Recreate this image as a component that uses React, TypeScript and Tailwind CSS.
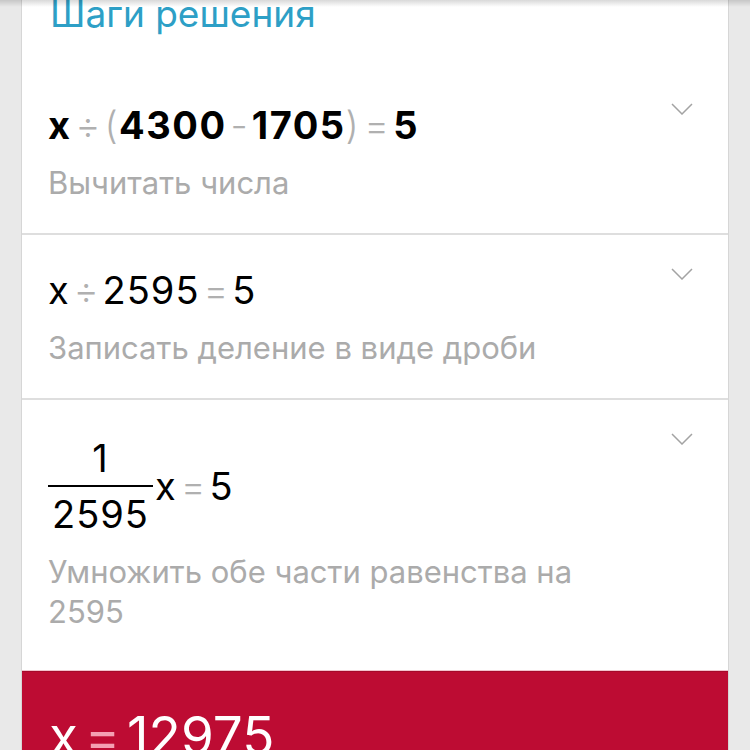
type Step = {
  id: number;
  hint: string;
};

function Chevron() {
  return (
    <svg width="22" height="12" viewBox="0 0 22 12" className="shrink-0">
      <path d="M1 1 L11 11 L21 1" fill="none" stroke="#a3a3a3" strokeWidth="1.5" />
    </svg>
  );
}

function Op({ children }: { children: React.ReactNode }) {
  return <span className="mx-[4px] font-light tracking-normal text-[#b0b0b0]">{children}</span>;
}

function StepRow({ step, children }: { step: Step; children: React.ReactNode }) {
  return (
    <div className="flex justify-between border-b-2 border-[#dedede] pl-[26px] pr-[35px] pt-[35px] pb-[30px]">
      <div className="flex flex-col">
        {children}
        <p className="mt-[18px] max-w-[560px] text-[31px] leading-[40px] text-[#ababab]">
          {step.hint}
        </p>
      </div>
      <div className="-mt-[2px]">
        <Chevron />
      </div>
    </div>
  );
}

const steps: Step[] = [
  { id: 1, hint: 'Вычитать числа' },
  { id: 2, hint: 'Записать деление в виде дроби' },
  { id: 3, hint: 'Умножить обе части равенства на 2595' },
];

export default function App() {
  return (
    <div className="relative min-h-screen overflow-hidden bg-[#e9e9e9] font-['Inter','Liberation_Sans',sans-serif]">
      <div className="pointer-events-none absolute inset-x-0 top-0 h-[7px] bg-gradient-to-b from-black/15 to-transparent" />
      <div className="mx-[21px] border-x border-[#d6d6d6] bg-white">
        <div className="h-[70px] pl-[28px]">
          <h2 className="text-[37px] leading-[27px] text-[#2d9fc6]">Шаги решения</h2>
        </div>

        <StepRow step={steps[0]}>
          <div className="text-[38px] font-bold leading-[40px] tracking-[1.5px] text-black">
            x<Op>÷</Op>
            <span className="font-light text-[#b0b0b0]">(</span>4300<Op>-</Op>1705
            <span className="font-light text-[#b0b0b0]">)</span>
            <Op>=</Op>5
          </div>
        </StepRow>

        <StepRow step={steps[1]}>
          <div className="text-[38px] leading-[40px] tracking-[1px] text-black">
            x<Op>÷</Op>2595<Op>=</Op>5
          </div>
        </StepRow>

        <div className="flex justify-between pl-[26px] pr-[35px] pt-[35px] pb-[38px]">
          <div className="flex flex-col">
            <div className="mt-[3px] flex items-center text-[38px] leading-[40px] tracking-[1px] text-black">
              <div className="flex flex-col items-center">
                <span>1</span>
                <span className="my-[7px] h-[2px] w-[105px] bg-black" />
                <span>2595</span>
              </div>
              <span className="ml-[2px]">
                x<Op>=</Op>5
              </span>
            </div>
            <p className="mt-[18px] max-w-[560px] text-[31px] leading-[40px] text-[#ababab]">
              {steps[2].hint}
            </p>
          </div>
          <div className="-mt-[2px]">
            <Chevron />
          </div>
        </div>

        <div className="border-t border-[#f2c3ce]">
          <div className="h-[90px] border-t border-[#a50a2b] bg-[#bd0c33] pl-[27px] pt-[36px]">
            <div className="text-[53px] leading-[56px] text-white">
              x<span className="mx-[7px] text-[#f4a0b3]">=</span>12975
            </div>
          </div>
        </div>
      </div>
    </div>
  );
}
